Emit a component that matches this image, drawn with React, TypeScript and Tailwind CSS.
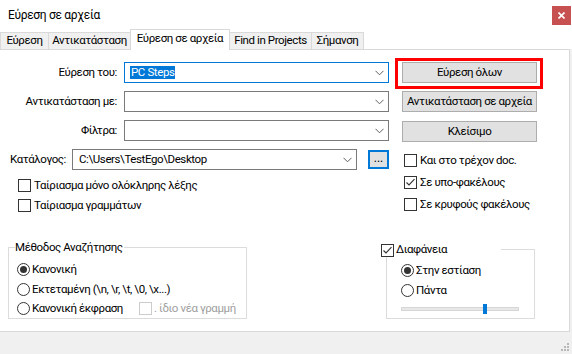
import React from "react";

const Chevron = () => (
  <svg width="9" height="6" viewBox="0 0 9 6" className="shrink-0">
    <path d="M0.5 0.8 L4.5 4.8 L8.5 0.8" fill="none" stroke="#606060" strokeWidth="1" />
  </svg>
);

const Combo = ({
  w,
  focused,
  children,
  pl = "pl-[5px]",
}: {
  w: string;
  focused?: boolean;
  children?: React.ReactNode;
  pl?: string;
}) => (
  <div
    className={`${w} h-[21px] bg-white border ${
      focused ? "border-[#0078d7]" : "border-[#7a7a7a]"
    } flex items-center ${pl} pr-[4px]`}
  >
    <div className="flex-1 flex items-center whitespace-nowrap leading-[15px]">{children}</div>
    <Chevron />
  </div>
);

const Check = ({ checked, disabled }: { checked?: boolean; disabled?: boolean }) => (
  <div
    className={`w-[13px] h-[13px] shrink-0 border bg-white flex items-center justify-center ${
      disabled ? "border-[#cccccc]" : "border-[#333333]"
    }`}
  >
    {checked && (
      <svg width="11" height="11" viewBox="0 0 11 11">
        <path d="M1.5 5.5 L4 8 L9.5 2.2" fill="none" stroke="#333333" strokeWidth="1.1" />
      </svg>
    )}
  </div>
);

const Radio = ({ checked }: { checked?: boolean }) => (
  <div className="w-[13px] h-[13px] shrink-0 rounded-full border border-[#333333] bg-white flex items-center justify-center">
    {checked && <div className="w-[7px] h-[7px] rounded-full bg-[#333333]" />}
  </div>
);

const Btn = ({ children }: { children: React.ReactNode }) => (
  <div className="w-[135px] h-[21px] bg-[#e1e1e1] border border-[#adadad] flex items-center justify-center text-black">
    {children}
  </div>
);

const Tab = ({ w, active, children }: { w: string; active?: boolean; children: React.ReactNode }) =>
  active ? (
    <div
      className={`${w} h-[21px] -mb-[1px] -ml-[1px] relative z-10 bg-white border-t border-l border-r border-[#d9d9d9] flex items-center justify-center pb-[2px]`}
    >
      {children}
    </div>
  ) : (
    <div
      className={`${w} h-[17px] -ml-[1px] first:ml-0 bg-[#f0f0f0] border-t border-l border-r border-[#d9d9d9] flex items-center justify-center`}
    >
      {children}
    </div>
  );

export default function App() {
  return (
    <div
      className="w-[572px] h-[354px] bg-white overflow-hidden text-[11.5px] leading-none text-black flex flex-col whitespace-nowrap tracking-[-0.4px]"
      style={{ fontFamily: 'Roboto, "Liberation Sans", sans-serif' }}
    >
      {/* Title bar */}
      <div className="h-[29px] flex items-start justify-between pl-[8px] pr-[1px] shrink-0">
        <div className="mt-[9px] text-[12px] tracking-[-0.3px]">Εύρεση σε αρχεία</div>
        <div className="mt-[6px] w-[19px] h-[19px] bg-[#c75050] flex items-center justify-center">
          <svg width="7" height="7" viewBox="0 0 7 7">
            <path d="M0.5 0.5 L6.5 6.5 M6.5 0.5 L0.5 6.5" stroke="white" strokeWidth="1.6" />
          </svg>
        </div>
      </div>

      {/* Tabs */}
      <div className="h-[20px] flex items-end shrink-0">
        <Tab w="w-[49px]">Εύρεση</Tab>
        <Tab w="w-[83px]">Αντικατάσταση</Tab>
        <Tab w="w-[100px]" active>
          Εύρεση σε αρχεία
        </Tab>
        <Tab w="w-[83px]">Find in Projects</Tab>
        <Tab w="w-[53px]">Σήμανση</Tab>
      </div>

      {/* Pane row */}
      <div className="flex h-[283px] shrink-0">
        <div className="w-[570px] h-[283px] border-t border-r border-b border-[#d9d9d9] bg-white flex flex-col">
          {/* Top section */}
          <div className="flex pt-[12px]">
            {/* Left column */}
            <div className="w-[389px] flex flex-col">
              <div className="flex items-center h-[21px]">
                <div className="w-[117px] text-right">Εύρεση του:</div>
                <div className="ml-[7px]">
                  <Combo w="w-[265px]" focused>
                    <span className="bg-[#0078d7] text-white h-[13px] flex items-center px-[1px]">PC Steps</span>
                  </Combo>
                </div>
              </div>
              <div className="flex items-center h-[21px] mt-[8px]">
                <div className="w-[117px] text-right">Αντικατάσταση με:</div>
                <div className="ml-[7px]">
                  <Combo w="w-[265px]" />
                </div>
              </div>
              <div className="flex items-center h-[21px] mt-[8px]">
                <div className="w-[117px] text-right">Φίλτρα:</div>
                <div className="ml-[7px]">
                  <Combo w="w-[265px]" />
                </div>
              </div>
              <div className="flex items-center h-[21px] mt-[8px] pl-[10px]">
                <div className="w-[62px]">Κατάλογος:</div>
                <Combo w="w-[285px]" pl="pl-[6px]">
                  <span>C:\Users\TestEgo\Desktop</span>
                </Combo>
                <div className="ml-[11px] w-[21px] h-[19px] border-2 border-[#0078d7] bg-[#e1e1e1] flex items-end justify-center pb-[3px]">
                  <span className="leading-none text-[12px] tracking-[0px]">...</span>
                </div>
              </div>
              <div className="flex items-center h-[13px] mt-[9px] pl-[18px]">
                <Check />
                <span className="ml-[3px]">Ταίριασμα μόνο ολόκληρης λέξης</span>
              </div>
              <div className="flex items-center h-[13px] mt-[7px] pl-[18px]">
                <Check />
                <span className="ml-[3px]">Ταίριασμα γραμμάτων</span>
              </div>
            </div>

            {/* Right column */}
            <div className="ml-[13px] flex flex-col">
              <div className="relative">
                <Btn>Εύρεση όλων</Btn>
                <div className="absolute -left-[7px] -top-[4px] w-[148px] h-[31px] border-[3px] border-[#ff0000] pointer-events-none" />
              </div>
              <div className="mt-[8px]">
                <Btn>Αντικατάσταση σε αρχεία</Btn>
              </div>
              <div className="mt-[9px]">
                <Btn>Κλείσιμο</Btn>
              </div>
              <div className="flex items-center h-[13px] mt-[12px] pl-[2px]">
                <Check />
                <span className="ml-[3px]">Και στο τρέχον doc.</span>
              </div>
              <div className="flex items-center h-[13px] mt-[9px] pl-[2px]">
                <Check checked />
                <span className="ml-[3px]">Σε υπο-φακέλους</span>
              </div>
              <div className="flex items-center h-[13px] mt-[9px] pl-[2px]">
                <Check />
                <span className="ml-[3px]">Σε κρυφούς φακέλους</span>
              </div>
            </div>
          </div>

          {/* Bottom section */}
          <div className="flex mt-[35px]">
            {/* Search mode group */}
            <div className="ml-[8px] w-[239px] h-[72px] border border-[#dcdcdc] relative flex flex-col pl-[8px] pt-[15px]">
              <div className="absolute left-[6px] -top-[7px] bg-white pr-[1px] pl-[0px] h-[14px] flex items-center">
                Μέθοδος Αναζήτησης
              </div>
              <div className="flex items-center h-[13px]">
                <Radio checked />
                <span className="ml-[2px]">Κανονική</span>
              </div>
              <div className="flex items-center h-[13px] mt-[7px]">
                <Radio />
                <span className="ml-[2px]">Εκτεταμένη (\n, \r, \t, \0, \x...)</span>
              </div>
              <div className="flex items-center h-[13px] mt-[6px]">
                <Radio />
                <span className="ml-[2px] w-[107px]">Κανονική έκφραση</span>
                <Check disabled />
                <span className="ml-[2px] text-[#a0a0a0]">. ίδιο νέα γραμμή</span>
              </div>
            </div>

            {/* Transparency group */}
            <div className="ml-[139px] mt-[2px] w-[149px] h-[70px] border border-[#dcdcdc] relative flex flex-col pl-[14px] pt-[14px]">
              <div className="absolute -left-[6px] -top-[7px] w-[120px] h-[14px] bg-white flex items-center">
                <Check checked />
                <span className="ml-[2px]">Διαφάνεια</span>
              </div>
              <div className="flex items-center h-[13px]">
                <Radio checked />
                <span className="ml-[2px]">Στην εστίαση</span>
              </div>
              <div className="flex items-center h-[13px] mt-[7px]">
                <Radio />
                <span className="ml-[2px]">Πάντα</span>
              </div>
              <div className="relative mt-[7px] w-[118px] h-[10px] flex items-center">
                <div className="w-[118px] h-[4px] bg-[#e7e7e7] border border-[#d6d6d6]" />
                <div className="absolute left-[82px] top-0 w-[4px] h-[10px] bg-[#0078d7]" />
              </div>
            </div>
          </div>
        </div>
        <div className="w-[2px] bg-[#f0f0f0]" />
      </div>

      {/* Bottom bar */}
      <div className="flex-1 bg-[#f0f0f0] flex justify-end items-end pr-[2px] pb-[2px]">
        <svg width="9" height="9" viewBox="0 0 9 9">
          <rect x="6" y="0" width="2" height="2" fill="#b8b8b8" />
          <rect x="3" y="3" width="2" height="2" fill="#b8b8b8" />
          <rect x="6" y="3" width="2" height="2" fill="#b8b8b8" />
          <rect x="0" y="6" width="2" height="2" fill="#b8b8b8" />
          <rect x="3" y="6" width="2" height="2" fill="#b8b8b8" />
          <rect x="6" y="6" width="2" height="2" fill="#b8b8b8" />
        </svg>
      </div>
    </div>
  );
}
